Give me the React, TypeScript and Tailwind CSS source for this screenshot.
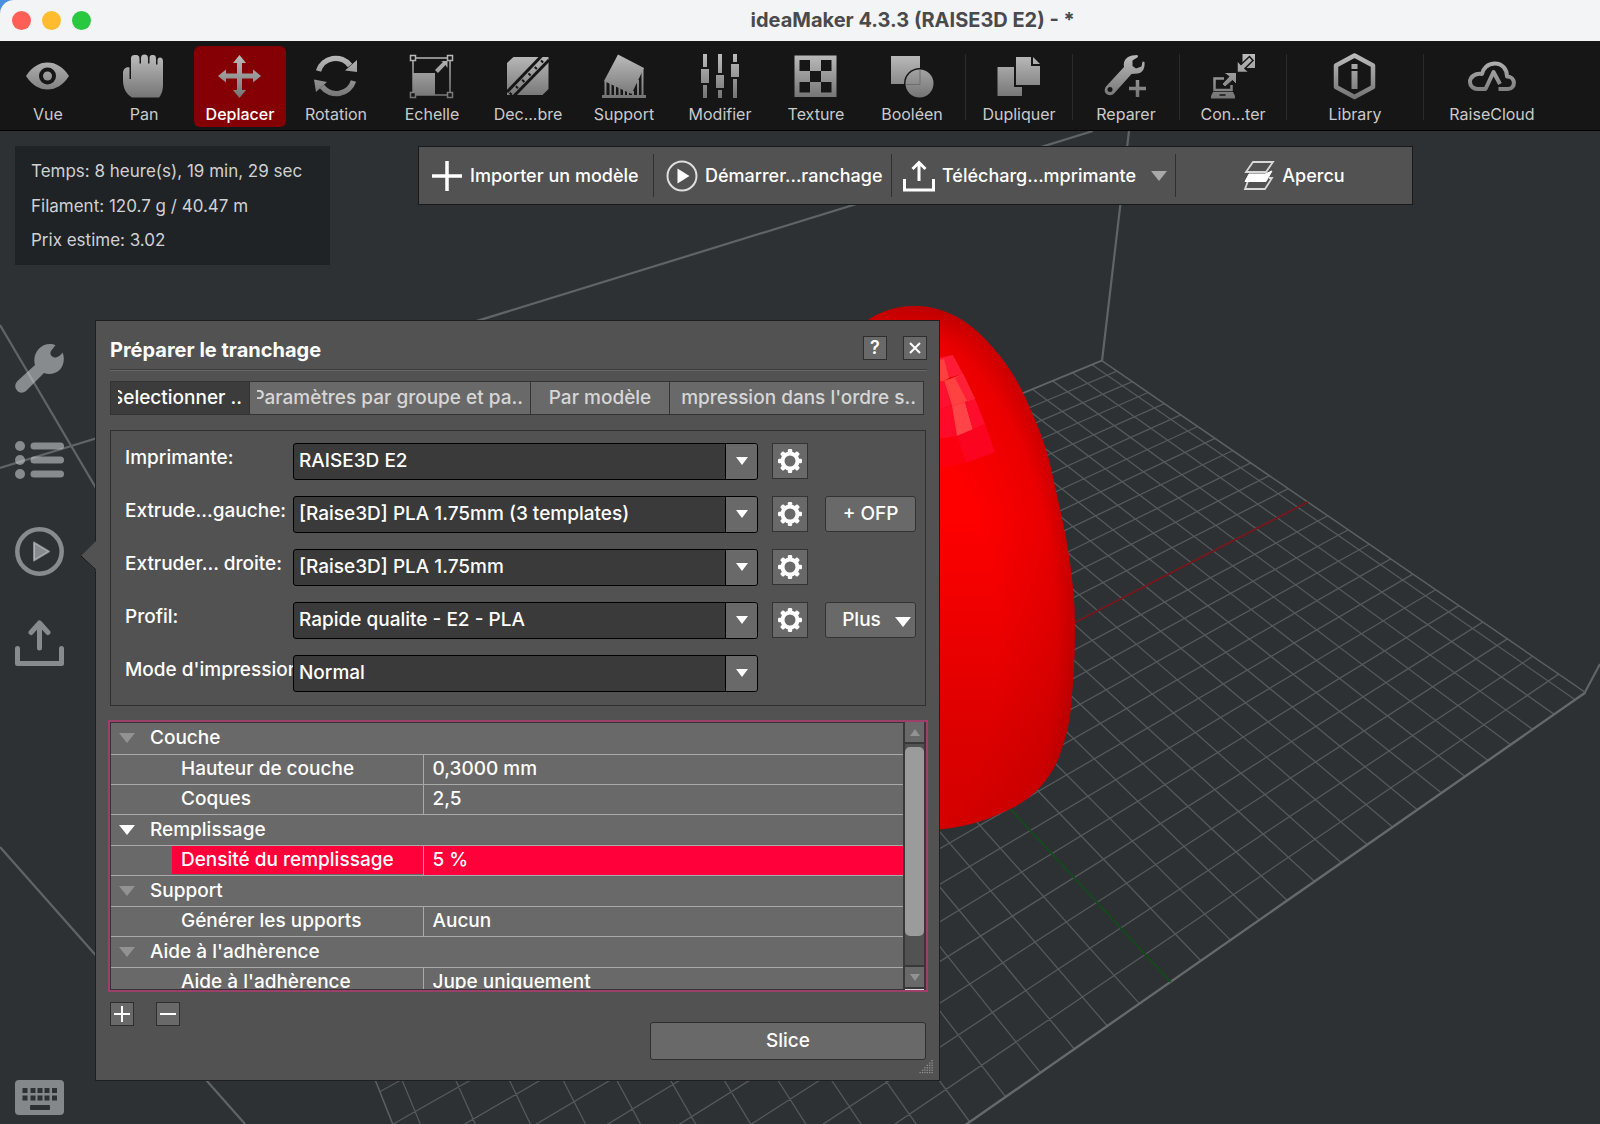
import { Fragment, type ReactNode } from "react";

// ─── 3D scene ─────────────────────────────────────────────────────────────────

// Bed coordinates are in millimetres, origin at the centre of the plate.
const BED_X = 165;
const BED_Y = 120;

function project(x: number, y: number) {
  const w = 1 + 0.001115 * x + 0.00146 * y;
  const px = (914.5 + 3.842 * x - 0.425 * y) / w;
  const py = (705.7 - 0.6745 * x - 0.868 * y) / w;
  return `${px.toFixed(1)} ${py.toFixed(1)}`;
}

function segment(x1: number, y1: number, x2: number, y2: number) {
  return `M${project(x1, y1)}L${project(x2, y2)}`;
}

function gridPath() {
  const parts: string[] = [];
  for (let x = -160; x <= 160; x += 10) parts.push(segment(x, -BED_Y, x, BED_Y));
  for (let y = -110; y <= 110; y += 10) parts.push(segment(-BED_X, y, BED_X, y));
  return parts.join("");
}

const MODEL =
  "M850 338C866 316 890 306 915 306C941 306 965 318 985 339C1003 358 1014 374 1024 395C1037 424 1047 446 1053 478C1062 520 1070 548 1074 600C1076 640 1074 672 1071 706C1069 728 1064 744 1057 762C1046 784 1030 800 1010 809C986 821 960 829 930 830L850 830Z";

function Scene() {
  return (
    <svg
      className="absolute inset-0 h-full w-full"
      viewBox="0 131 1600 993"
      preserveAspectRatio="xMinYMin slice"
      fill="none"
      aria-hidden="true"
    >
      <defs>
        <linearGradient id="modelBase" x1="0" y1="306" x2="0" y2="830" gradientUnits="userSpaceOnUse">
          <stop offset="0" stopColor="#e00000" />
          <stop offset="0.06" stopColor="#ff0000" />
          <stop offset="0.4" stopColor="#fe0000" />
          <stop offset="0.6" stopColor="#ee0000" />
          <stop offset="0.82" stopColor="#dc0000" />
          <stop offset="1" stopColor="#d40000" />
        </linearGradient>
        <radialGradient id="modelEdge" cx="0" cy="0" r="1" gradientUnits="userSpaceOnUse" gradientTransform="translate(905 640) scale(172 345)">
          <stop offset="0.55" stopColor="#900000" stopOpacity="0" />
          <stop offset="0.88" stopColor="#900000" stopOpacity="0.18" />
          <stop offset="1" stopColor="#900000" stopOpacity="0.5" />
        </radialGradient>
      </defs>
      <path d={gridPath()} stroke="#54595b" strokeWidth="1.3" />
      <path d={segment(-BED_X, BED_Y, -BED_X, -BED_Y)} stroke="#5b6062" strokeWidth="1.5" />
      <path d={segment(BED_X, BED_Y, BED_X, -BED_Y)} stroke="#5b6062" strokeWidth="1.5" />
      <path d={segment(-BED_X, BED_Y, BED_X, BED_Y)} stroke="#606567" strokeWidth="2" />
      <path d={segment(-BED_X, -BED_Y, BED_X, -BED_Y)} stroke="#65696b" strokeWidth="2.4" />
      <path d={segment(0, 0, BED_X, 0)} stroke="#7d0f14" strokeWidth="1.5" />
      <path d={segment(0, 0, 0, -BED_Y)} stroke="#0d4a14" strokeWidth="1.6" />
      <path
        d="M1102 361L1129 131M0 468L1093 131M0 325L232 719M1584 694L1600 664M0 847L245 1124"
        stroke="#5f6466"
        strokeWidth="2.2"
      />
      <path d={MODEL} fill="url(#modelBase)" />
      <path d={MODEL} fill="url(#modelEdge)" />
      <path d="M939 358L953 355L963 374L944 379L939 380Z" fill="#ff1b36" />
      <path d="M939 360L944 359L949 378L944 381L939 382Z" fill="#ff4040" />
      <path d="M944 381L963 374L975 399L952 406Z" fill="#ff4141" />
      <path d="M963 374L966 380L975 399L967 401L955 378Z" fill="#ff2037" />
      <path d="M939 382L944 381L952 406L939 409Z" fill="#ff1030" />
      <path d="M939 409L952 406L957 436L939 439Z" fill="#ff0a28" />
      <path d="M952 406L965 402L973 430L957 436Z" fill="#ff4448" />
      <path d="M965 402L975 399L985 424L973 430Z" fill="#ff0d2c" />
      <path d="M957 436L985 424L995 452L966 463Z" fill="#fb0420" />
      <path d="M939 439L957 436L966 463L939 468Z" fill="#fd0010" />
    </svg>
  );
}

// ─── Icons ────────────────────────────────────────────────────────────────────

function SteelGradient() {
  return (
    <svg className="absolute size-0" aria-hidden="true">
      <defs>
        <linearGradient id="steel" x1="0" y1="0" x2="0" y2="44" gradientUnits="userSpaceOnUse">
          <stop offset="0" stopColor="#bcbcbc" />
          <stop offset="1" stopColor="#747474" />
        </linearGradient>
      </defs>
    </svg>
  );
}

const BLACK = "#161616";
const STEEL = "url(#steel)";

const ICONS: Record<string, ReactNode> = {
  vue: (
    <>
      <path d="M0 22C6 13 13 8.500 21.500 8.500S37 13 43 22C37 31 30 35.500 21.500 35.500S6 31 0 22Z" />
      <circle cx="21.500" cy="22" r="8.500" fill={BLACK} />
      <circle cx="21.500" cy="22" r="4.500" />
    </>
  ),
  pan: (
    <path d="M10 43.500C4 40 1 34 1 26V19C1 15 4 12.500 7.500 13.500V25H9V5C9 1.500 10.500 1 13.500 1S17.500 2 17.500 5V9.500H19V4C19 1.500 20.500 .5 22.500 .5S26 1.500 26 4V9.500H27.500V4C27.500 1.500 29 1 31 1S34 2 34 4.500V10.500H35.500V6.500C35.500 4.500 36.500 3.500 38 3.500S41 4.500 41 7V30C41 36 40 40 37 43.500Z" />
  ),
  move: (
    <path d="M21.500 1L28 9H24V19.500H35V15.500L43 22L35 28.500V24.500H24V36H28L21.500 44L15 36H19V24.500H8V28.500L0 22L8 15.500V19.500H19V9H15Z" />
  ),
  rotation: (
    <>
      <path d="M4.500 17A18 18 0 0 1 36 11.500" fill="none" stroke={STEEL} strokeWidth="5.500" />
      <path d="M43 6V18L31 16.500Z" />
      <path d="M39.500 27A18 18 0 0 1 8 32.500" fill="none" stroke={STEEL} strokeWidth="5.500" />
      <path d="M0 25.500L13 28L2 38Z" />
    </>
  ),
  scale: (
    <>
      <path d="M3 4H40V41H3Z" fill="none" stroke={STEEL} strokeWidth="1.500" />
      <path d="M3 19H25V41H3Z" />
      {[[3, 4], [40, 4], [3, 41], [40, 41]].map(([x, y]) => (
        <rect key={`${x}-${y}`} x={x - 2.5} y={y - 2.5} width="5" height="5" fill={BLACK} stroke={STEEL} strokeWidth="1.500" />
      ))}
      <path d="M25 16L33 8L31 7L37.500 7V14L35.500 11L28 19Z" />
    </>
  ),
  cut: (
    <>
      <path d="M7.500 3H42.500V35L36.500 41H1V9Z" />
      <path d="M1 38L36 1.500" stroke={BLACK} strokeWidth="3" />
      <path d="M7 43L43 6" stroke={BLACK} strokeWidth="3" />
      <path d="M4 40.500L40 3.500" stroke={BLACK} strokeWidth="3" strokeDasharray="2 7" />
    </>
  ),
  support: (
    <>
      <path d="M16 .5L42 14L29.500 40L2 27Z" />
      <path d="M0 42.500H44" stroke={STEEL} strokeWidth="3" />
      <path d="M3.500 27V42M8.500 29V42M13 32V42M17.500 34V42M22 36V42M26 38V42M31 37V42M36 26V42M40.500 14V42" stroke={STEEL} strokeWidth="2" />
    </>
  ),
  modifier: (
    <>
      <path d="M5 0H9V13H5ZM5 31H9V44H5ZM20 0H24V19H20ZM20 36H24V44H20ZM35 0H39V8H35ZM35 25H39V44H35Z" />
      <path d="M3 15H11V29H3ZM18 21H26V34H18ZM33 10H41V23H33Z" />
    </>
  ),
  texture: (
    <>
      <path d="M.5 1.500H42.500V43H.5Z" />
      <path d="M5.500 6H16V17H5.500ZM27 6H37.500V17H27ZM16 17H27V28H16ZM5.500 28H16V38.500H5.500ZM27 28H37.500V38.500H27Z" fill={BLACK} />
    </>
  ),
  boolean: (
    <>
      <path d="M1 2H30V30H1Z" />
      <circle cx="29.500" cy="29.500" r="15.500" fill={BLACK} />
      <circle cx="29.500" cy="29.500" r="14" />
      <path d="M16 30.500H30V16" fill="none" stroke="#6e6e6e" />
    </>
  ),
  duplicate: (
    <>
      <path d="M.5 13H25V42H.5Z" />
      <path d="M17 1H37L45 9V33H17Z" fill={BLACK} />
      <path d="M19 3H34V12H43V31H19Z" />
      <path d="M36 3L43 10H36Z" />
    </>
  ),
  repair: (
    <>
      <path d="M2.500 32L20 13C19 7 22 3 28 1.500L33.500 1L34 3L28.500 6.500V12L32 14.500L37.500 12.500L38.500 7.500L40.500 8C41 14 39 18.500 34 19.500L27.500 20L10.500 39C8 42 4 41.500 2 39.500C0 37.500 .500 34 2.500 32Z" />
      <circle cx="6" cy="35.500" r="2.500" fill={BLACK} />
      <path d="M33.500 26V43M25 34.500H42" stroke={STEEL} strokeWidth="3.500" />
    </>
  ),
  connect: (
    <>
      <path d="M13 24.500H3.500V36H20.500V31" fill="none" stroke={STEEL} strokeWidth="2.500" />
      <path d="M2 38H22L24 42V44.500H0V42Z" />
      <path d="M8.500 41H14.500" stroke={BLACK} strokeWidth="1.500" />
      <path d="M12.500 18.500H25.500V30.500L21.500 26.500L14 33L11 30L18 22.500Z" stroke={BLACK} strokeWidth="1" />
      <path d="M31.500 0H44V14H31.500Z" />
      <path d="M26 6L30 10.500L38.500 2.500L42 6.500L34 14.500L38.500 18.500H26Z" stroke={BLACK} strokeWidth="1.500" />
    </>
  ),
  library: (
    <>
      <path d="M21.500 1.500L40 11.500V33L21.500 43L3 33V11.500Z" fill="none" stroke={STEEL} strokeWidth="4.500" strokeLinejoin="round" />
      <path d="M18.500 10H24.500V15H18.500ZM18.500 17H24.500V35H18.500Z" />
    </>
  ),
  cloud: (
    <path
      d="M28.500 35H38C46 35 46 22.500 37 22.500C37 15 32 9.500 25 9.500C17.500 9.500 13 14.500 12 20C5 19 0 23 0 28C0 32 3.500 35 7.500 35H15.500L23.500 18L30 30"
      fill="none"
      stroke={STEEL}
      strokeWidth="4"
      strokeLinejoin="round"
    />
  ),
};

function ToolIcon({ name }: { name: string }) {
  return (
    <svg className="size-11 overflow-visible" viewBox="0 0 44 44" fill={STEEL} aria-hidden="true">
      {ICONS[name]}
    </svg>
  );
}

function GearIcon() {
  return (
    <svg className="size-6" viewBox="0 0 24 24" aria-hidden="true">
      <circle cx="12" cy="12" r="7.500" fill="none" stroke="#fff" strokeWidth="4" />
      {[0, 45, 90, 135, 180, 225, 270, 315].map((a) => (
        <rect key={a} x="9.800" y="0" width="4.400" height="4.500" rx="1.200" fill="#fff" transform={`rotate(${a} 12 12)`} />
      ))}
    </svg>
  );
}

function Triangle({ className }: { className: string }) {
  return (
    <svg className={className} viewBox="0 0 16 10" preserveAspectRatio="none" fill="currentColor" aria-hidden="true">
      <path d="M0 0H16L8 10Z" />
    </svg>
  );
}

// ─── Top toolbar ──────────────────────────────────────────────────────────────

const TOOLS = [
  { icon: "vue", label: "Vue" },
  { icon: "pan", label: "Pan" },
  { icon: "move", label: "Deplacer", active: true },
  { icon: "rotation", label: "Rotation" },
  { icon: "scale", label: "Echelle" },
  { icon: "cut", label: "Dec...bre" },
  { icon: "support", label: "Support" },
  { icon: "modifier", label: "Modifier" },
  { icon: "texture", label: "Texture" },
  { icon: "boolean", label: "Booléen" },
];

const EXTRA_TOOLS = [
  { icon: "duplicate", label: "Dupliquer", width: "w-[107px]" },
  { icon: "repair", label: "Reparer", width: "w-[107px]" },
  { icon: "connect", label: "Con...ter", width: "w-[107px]" },
  { icon: "library", label: "Library", width: "w-[137px]" },
  { icon: "cloud", label: "RaiseCloud", width: "w-[137px]" },
];

function ToolButton({ icon, label, active }: { icon: string; label: string; active?: boolean }) {
  return (
    <button
      className={`flex h-[81px] w-[92px] flex-col items-center gap-1.5 rounded-md pt-2 text-base leading-5 ${
        active ? "bg-[#850005] font-medium text-white" : "text-[#cacaca]"
      }`}
    >
      <ToolIcon name={icon} />
      {label}
    </button>
  );
}

function Toolbar() {
  return (
    <nav className="flex h-[90px] shrink-0 items-start border-b border-black bg-[#161616] pt-[5px] pl-0.5">
      <div className="flex gap-1">
        {TOOLS.map((tool) => (
          <ToolButton key={tool.label} {...tool} />
        ))}
      </div>
      <div className="flex pl-[7px]">
        {EXTRA_TOOLS.map((tool) => (
          <div key={tool.label} className={`flex justify-center ${tool.width}`}>
            <span className="mt-2 h-[66px] w-px bg-[#2b2b2b]" />
            <div className="flex flex-1 justify-center">
              <ToolButton icon={tool.icon} label={tool.label} />
            </div>
          </div>
        ))}
      </div>
    </nav>
  );
}

// ─── Floating panels ──────────────────────────────────────────────────────────

function PrintEstimate() {
  return (
    <section className="flex h-[119px] w-[315px] flex-col justify-between bg-[#1f2326] py-[15px] pl-4 text-[17px] leading-5 text-[#cfd1d2]">
      <p>Temps: 8 heure(s), 19 min, 29 sec</p>
      <p>Filament: 120.7 g / 40.47 m</p>
      <p>Prix estime: 3.02</p>
    </section>
  );
}

function ActionBar() {
  const item = "flex items-center gap-[7px] whitespace-nowrap";
  return (
    <div className="flex h-[59px] w-[995px] items-stretch border border-[#17191a] bg-[#525252] text-lg font-medium text-white">
      <button className={`${item} w-[234px] pl-3`}>
        <svg className="size-8" viewBox="0 0 32 32" stroke="currentColor" strokeWidth="3.500" aria-hidden="true">
          <path d="M16 1V31M1 16H31" />
        </svg>
        Importer un modèle
      </button>
      <span className="my-[7px] w-px bg-[#303030]" />
      <button className={`${item} w-[237px] pl-3`}>
        <svg className="size-8" viewBox="0 0 32 32" fill="none" aria-hidden="true">
          <circle cx="16" cy="16" r="14.500" stroke="#dedede" strokeWidth="2" />
          <path d="M11.500 8.500V23.500L23.500 16Z" fill="#fff" />
        </svg>
        Démarrer...ranchage
      </button>
      <span className="my-[7px] w-px bg-[#303030]" />
      <button className={`${item} w-[283px] pl-[11px]`}>
        <svg className="size-8" viewBox="0 0 32 32" fill="none" stroke="currentColor" strokeWidth="3" aria-hidden="true">
          <path d="M1.500 19V30H30.500V19M16 21V3M9.500 9L16 2.500L22.500 9" />
        </svg>
        Télécharg...mprimante
        <Triangle className="ml-auto mr-2 h-2.5 w-4 text-[#a9a9a9]" />
      </button>
      <span className="my-[7px] w-px bg-[#303030]" />
      <button className={`${item} flex-1 justify-center`}>
        <svg className="size-8" viewBox="0 0 32 32" fill="none" stroke="#d8d8d8" strokeWidth="1.800" aria-hidden="true">
          <path d="M5 21L2 29H22L29 18H26" />
          <path d="M10 2H30L23 12H3Z" />
          <path d="M6 14L22 14L29 11L23 21.500H2Z" fill="#fff" stroke="#fff" strokeWidth="1" />
        </svg>
        Apercu
      </button>
    </div>
  );
}

function SideRail() {
  return (
    <aside className="flex w-20 shrink-0 flex-col items-start self-stretch pb-[9px] pl-[15px] text-[#d2d5d8]/55">
      <button aria-label="Réparer" className="mt-6">
        <svg className="size-[49px]" viewBox="0 0 49 49" fill="currentColor" aria-hidden="true">
          <path d="M2.500 37L20 21C17 11 24 0 35 0C37 0 39 .5 40.500 1L36 7C34 10 37 14 41 13.500C43.500 13 46 11 47.500 8.500C50 14 49 22 44 26.500C40 30 34 31 29 29L11.500 46.500C9 49 5 49.500 2.500 47C-.5 44 -.5 40 2.500 37Z" />
        </svg>
      </button>
      <button aria-label="Liste" className="mt-[48px]">
        <svg className="h-[38px] w-[49px]" viewBox="0 0 49 38" fill="currentColor" aria-hidden="true">
          {[5, 19, 33].map((y) => (
            <Fragment key={y}>
              <circle cx="5" cy={y} r="5" />
              <rect x="15.500" y={y - 3.5} width="33.500" height="7" rx="3.500" />
            </Fragment>
          ))}
        </svg>
      </button>
      <button aria-label="Trancher" className="mt-[48px]">
        <svg className="size-[49px]" viewBox="0 0 49 49" fill="none" aria-hidden="true">
          <circle cx="24.500" cy="24.500" r="22.200" stroke="currentColor" strokeWidth="4.500" />
          <path d="M19 15.500L34 24.500L19 33.500Z" fill="currentColor" stroke="currentColor" strokeWidth="2" strokeLinejoin="round" />
        </svg>
      </button>
      <button aria-label="Exporter" className="mt-11">
        <svg className="h-[47px] w-[49px]" viewBox="0 0 49 47" fill="none" stroke="currentColor" strokeWidth="5" strokeLinecap="round" strokeLinejoin="round" aria-hidden="true">
          <path d="M2.500 28.500V43.500H46.500V28.500M24.500 28V3.500M16 12.500L24.500 3L33 12.500" />
        </svg>
      </button>
      <button aria-label="Raccourcis clavier" className="mt-auto">
        <svg className="h-[35px] w-[49px]" viewBox="0 0 49 35" aria-hidden="true">
          <rect width="49" height="35" rx="4" fill="#84888b" />
          {[8, 15.5].map((y) =>
            [7.5, 15.5, 22.5, 29.5, 37].map((x) => <rect key={`${x}-${y}`} x={x} y={y} width="5" height="5" fill="#2d3134" />),
          )}
          <rect x="15" y="25" width="20" height="5" rx="1" fill="#2d3134" />
        </svg>
      </button>
    </aside>
  );
}

// ─── Slice dialog ─────────────────────────────────────────────────────────────

const FIELDS = [
  { id: "printer", label: "Imprimante:", value: "RAISE3D E2", gear: true },
  { id: "left", label: "Extrude...gauche:", value: "[Raise3D] PLA 1.75mm (3 templates)", gear: true, extra: "+ OFP" },
  { id: "right", label: "Extruder... droite:", value: "[Raise3D] PLA 1.75mm", gear: true },
  { id: "profile", label: "Profil:", value: "Rapide qualite - E2 - PLA", gear: true, extra: "Plus" },
  { id: "mode", label: "Mode d'impression:", value: "Normal" },
];

function FieldRow({ id, label, value, gear, extra }: (typeof FIELDS)[number]) {
  return (
    <div className="flex h-9 items-center">
      <label htmlFor={id} className="w-[168px] shrink-0 overflow-hidden whitespace-nowrap pb-1.5">
        {label}
      </label>
      <div className="relative h-[37px] w-[465px] shrink-0">
        <select
          id={id}
          className="h-full w-full appearance-none rounded-[3px] border border-black bg-[#3a3a3a] pl-[5px] text-white"
        >
          <option>{value}</option>
        </select>
        <span className="pointer-events-none absolute inset-y-px right-px flex w-8 items-center justify-center rounded-r-[2px] border-l border-black bg-[#696969]">
          <Triangle className="h-2 w-3" />
        </span>
      </div>
      {gear && (
        <button
          aria-label={`Réglages ${label}`}
          className="ml-3.5 flex size-9 items-center justify-center border border-[#333] bg-[#696969]"
        >
          <GearIcon />
        </button>
      )}
      {extra && (
        <button className="ml-[17px] flex h-9 w-[91px] items-center justify-center gap-3.5 rounded-[3px] border border-[#333] bg-[#696969]">
          {extra}
          {extra === "Plus" && <Triangle className="mt-1 -mr-3 h-2.5 w-4" />}
        </button>
      )}
    </div>
  );
}

const TABS = [
  { label: "Selectionner ..", width: "w-[139px]", active: true },
  { label: "Paramètres par groupe et pa..", width: "w-[281px]" },
  { label: "Par modèle", width: "w-[139px]" },
  { label: "mpression dans l'ordre s..", width: "flex-1" },
];

const SETTINGS: { label: string; value?: string; open?: boolean; selected?: boolean }[] = [
  { label: "Couche" },
  { label: "Hauteur de couche", value: "0,3000 mm" },
  { label: "Coques", value: "2,5" },
  { label: "Remplissage", open: true },
  { label: "Densité du remplissage", value: "5 %", selected: true },
  { label: "Support" },
  { label: "Générer les upports", value: "Aucun" },
  { label: "Aide à l'adhèrence" },
  { label: "Aide à l'adhèrence", value: "Jupe uniquement" },
];

function SettingsTable() {
  return (
    <div className="flex h-[272px] border-2 border-[#9b4069] bg-[#525252]">
      <div className="flex-1 overflow-hidden border border-r-0 border-[#3c3036] bg-[#696969]">
        <table className="w-full border-collapse text-left leading-7">
          <tbody>
            {SETTINGS.map(({ label, value, open, selected }) =>
              value === undefined ? (
                <tr key={label} className="h-[31px] border-b border-[#a9a9a9]">
                  <th colSpan={2} className="p-0 font-medium">
                    <span className="flex items-center gap-[15px] pl-2">
                      <Triangle className={open ? "h-2.5 w-4" : "h-2.5 w-4 text-[#929292]"} />
                      {label}
                    </span>
                  </th>
                </tr>
              ) : (
                <tr key={`${label}-value`} className="h-[30px] border-b border-[#a9a9a9]">
                  <td className="w-[312px] border-r border-[#a9a9a9] p-0 pl-[61px]">
                    <span className={selected ? "block bg-[#ff003a] pl-[9px]" : "block pl-[9px]"}>{label}</span>
                  </td>
                  <td className={selected ? "bg-[#ff003a] p-0 pl-[9px]" : "p-0 pl-[9px]"}>{value}</td>
                </tr>
              ),
            )}
          </tbody>
        </table>
      </div>
      <div className="flex w-[23px] flex-col border-x-2 border-[#383838]">
        <button aria-label="Défiler vers le haut" className="flex h-[22px] items-center justify-center border-b-2 border-[#383838] bg-[#696969]">
          <Triangle className="h-[7px] w-2.5 rotate-180 text-[#929292]" />
        </button>
        <div className="flex-1 pt-[3px]">
          <div className="h-[189px] rounded-[5px] bg-[#9b9b9b]" />
        </div>
        <button aria-label="Défiler vers le bas" className="flex h-[24px] items-center justify-center border-y-2 border-[#383838] bg-[#696969]">
          <Triangle className="h-[7px] w-2.5 text-[#929292]" />
        </button>
        <div className="h-px bg-[#dcdcdc]" />
      </div>
    </div>
  );
}

function SmallButton({ label, path }: { label: string; path: string }) {
  return (
    <button aria-label={label} className="flex size-6 items-center justify-center border border-[#2e2e2e] bg-[#696969]">
      <svg className="size-[18px]" viewBox="0 0 18 18" fill="none" stroke="#fff" strokeWidth="2" aria-hidden="true">
        <path d={path} />
      </svg>
    </button>
  );
}

function SliceDialog() {
  return (
    <div
      role="dialog"
      aria-labelledby="slice-title"
      className="relative ml-[15px] flex h-[761px] w-[845px] flex-col border border-[#1d1f20] bg-[#525252] pt-[15px] pr-3 pl-3.5 text-[19px] font-medium text-white"
    >
      {/* Pointer toward the rail button */}
      <svg className="absolute top-[220px] -left-[15px] h-[30px] w-[15px]" viewBox="0 0 15 30" aria-hidden="true">
        <path d="M15 0L0 15L15 30Z" fill="#525252" />
        <path d="M0 15L15 29" stroke="#111" />
      </svg>

      <header className="flex h-[33px] items-start justify-between">
        <h1 id="slice-title" className="text-xl leading-7 font-bold">
          Préparer le tranchage
        </h1>
        <div className="flex gap-4">
          <button aria-label="Aide" className="flex size-6 items-center justify-center border border-[#2e2e2e] bg-[#696969] text-lg font-semibold">
            ?
          </button>
          <SmallButton label="Fermer" path="M4 4L14 14M14 4L4 14" />
        </div>
      </header>
      <div className="h-0.5 border-t border-[#3c3c3c] bg-[#686868]" />

      <div role="tablist" className="mt-2.5 mr-[3px] flex h-[34px] border border-[#333] bg-[#696969]">
        {TABS.map(({ label, width, active }) => (
          <button
            key={label}
            role="tab"
            aria-selected={active ?? false}
            className={`flex items-center border-r border-[#333] px-[7px] last:border-r-0 ${width} ${active ? "bg-[#3c3c3c]" : "text-[#d6d6d6]"}`}
          >
            <span className={`flex w-full overflow-hidden whitespace-nowrap ${label === "Par modèle" ? "justify-center" : "justify-end"}`}>
              {label}
            </span>
          </button>
        ))}
      </div>

      <div className="mt-[15px] mr-px flex h-[276px] shrink-0 flex-col gap-[17px] border border-[#2f2f2f] pt-3 pl-3.5">
        {FIELDS.map((field) => (
          <FieldRow key={field.id} {...field} />
        ))}
      </div>

      <div className="-mr-px -ml-0.5 mt-3.5">
        <SettingsTable />
      </div>

      <footer className="mr-px flex justify-between pt-2.5">
        <div className="flex gap-[22px]">
          <SmallButton label="Ajouter" path="M9 1V17M1 9H17" />
          <SmallButton label="Retirer" path="M1 9H17" />
        </div>
        <button className="mt-5 h-[38px] w-[276px] rounded-[3px] border border-[#2e2e2e] bg-[#696969]">Slice</button>
      </footer>

      <svg className="absolute right-1.5 bottom-1.5 size-3.5 text-[#999]" viewBox="0 0 14 14" fill="currentColor" aria-hidden="true">
        {[0, 1, 2, 3, 4, 5].map((row) =>
          Array.from({ length: row + 1 }, (_, i) => (
            <rect key={`${row}-${i}`} x={12.5 - i * 2.4} y={row * 2.4} width="1.200" height="1.200" />
          )),
        )}
      </svg>
    </div>
  );
}

// ─── Window ───────────────────────────────────────────────────────────────────

export default function App() {
  return (
    <div className="flex min-h-screen flex-col bg-[#2d3134] font-['Inter','Liberation_Sans',sans-serif]">
      <SteelGradient />
      <div className="h-[41px] shrink-0 bg-[#4a8fe0]">
        <header className="flex h-full items-center rounded-tl-[14px] bg-[#f3f4f6] px-3">
          <div className="flex flex-[59] gap-[11px]">
            <span className="size-[19px] rounded-full bg-[#ff5f57]" />
            <span className="size-[19px] rounded-full bg-[#febc2e]" />
            <span className="size-[19px] rounded-full bg-[#28c840]" />
          </div>
          <div className="pb-0.5 text-xl leading-6 font-bold text-[#4a4a4c]">ideaMaker 4.3.3 (RAISE3D E2) - *</div>
          <div className="flex-[41]" />
        </header>
      </div>
      <Toolbar />
      <main className="relative flex flex-1 flex-col overflow-hidden">
        <Scene />
        <div className="relative flex items-start gap-[88px] pt-[15px] pl-[15px]">
          <PrintEstimate />
          <ActionBar />
        </div>
        <div className="relative flex flex-1 items-start pt-[55px]">
          <SideRail />
          <SliceDialog />
        </div>
      </main>
    </div>
  );
}
